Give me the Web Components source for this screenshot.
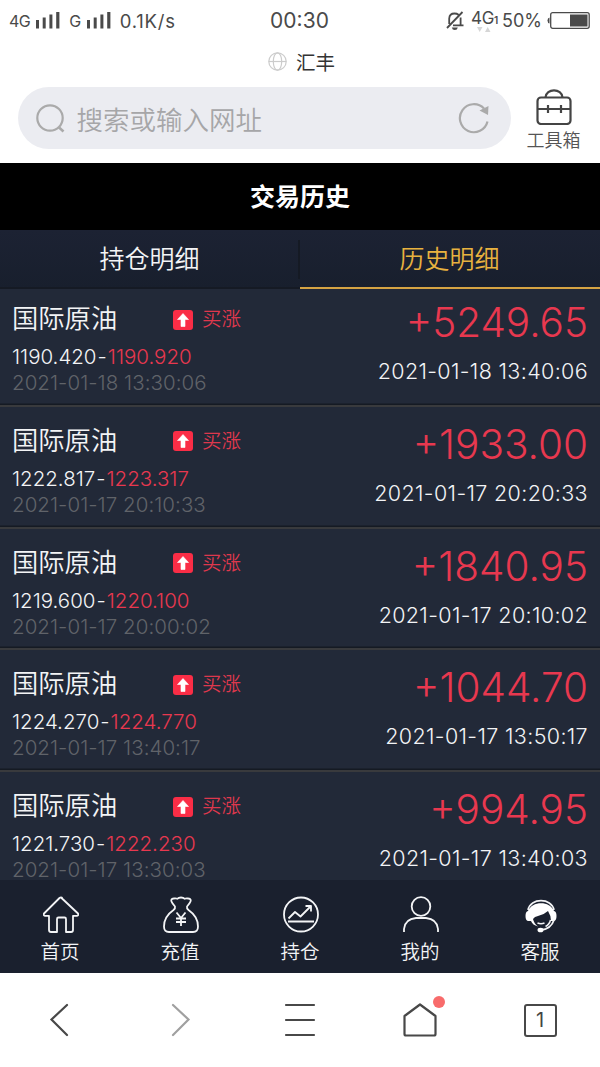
<!DOCTYPE html>
<html lang="zh-CN">
<head>
<meta charset="utf-8">
<meta name="viewport" content="width=device-width, initial-scale=1">
<title>交易历史</title>
<style>
    body {
        margin: 0;
        background: #fff;
        color: #444;
        font-family: Inter, "Noto Sans CJK SC", sans-serif;
    }
</style>
</head>
<body>
<history-app></history-app>

<script>
class StatusBar extends HTMLElement {
    constructor() {
        super();
        this.shadowDOM = this.attachShadow({mode: "open"});
    }

    connectedCallback() {
        this.render();
    }

    render() {
        const signal = `
        <svg width="24" height="17" viewBox="0 0 24 17" fill="#4a4a4a">
            <path d="M0 8h3v8.500H0zM6.700 5.500h3v11h-3zM13.400 2.500h3v14h-3zM20.200 0h3.200v16.500h-3.200z"/>
        </svg>`;
        this.shadowDOM.innerHTML = `
        <style>
            :host {
                display: grid;
                grid-template-columns: 1fr 60px 1fr;
                align-items: center;
                height: 41px;
                padding: 0 10px 0 9px;
                box-sizing: border-box;
                color: #4a4a4a;
                font-size: 18px;
                white-space: nowrap;
            }
            div {
                display: flex;
                align-items: center;
            }
            svg {
                flex: none;
                display: block;
            }
            .net {
                font-size: 16px;
            }
            .left .net {
                letter-spacing: -0.5px;
            }
            .left svg {
                margin: 0 9px 0 6px;
            }
            .speed {
                font-size: 18.500px;
                letter-spacing: 0.8px;
            }
            .time {
                font-size: 21px;
                justify-content: center;
            }
            .right {
                justify-content: flex-end;
            }
            .mobile {
                position: relative;
                margin: -6px 4px 0 7px;
                font-size: 17px;
                letter-spacing: -0.3px;
            }
            .mobile small {
                font-size: 10px;
                font-weight: 600;
            }
            .mobile svg {
                position: absolute;
                left: 6px;
                top: 19px;
            }
            .battery {
                margin-left: 5px;
            }
        </style>
        <div class="left">
            <span class="net">4G</span>${signal}<span class="net">G</span>${signal}<span class="speed">0.1K/s</span>
        </div>
        <div class="time">00:30</div>
        <div class="right">
            <svg width="18" height="20" viewBox="0 0 18 20" fill="none" stroke="#4a4a4a" stroke-width="1.800">
                <path d="M1 17 16.500 1M3.200 13V7.500Q3.500 2.500 8.500 2.500q2.500 0 4 1.200M14.600 6.500V14M7 14.300h10.500"/>
                <path d="M5.800 16.500h6q-.5 2.500-3 2.500t-3-2.500z" fill="#4a4a4a" stroke="none"/>
            </svg>
            <span class="mobile">4G<small>1</small>
                <svg width="14" height="5" viewBox="0 0 14 5" fill="#d6d6d6"><path d="M0 0h5.500L2.700 5zM8 5h5.500L10.700 0z"/></svg>
            </span>
            <span>50%</span>
            <svg class="battery" width="43" height="17" viewBox="0 0 43 17">
                <path d="M2.500 5.500v6q-2-.3-2-3t2-3z" fill="#4a4a4a"/>
                <rect x="3.700" y=".7" width="38.500" height="15.600" rx="2" fill="none" stroke="#4a4a4a" stroke-width="1.300"/>
                <path d="M23 2.500h17.500v12H23z" fill="#4a4a4a"/>
            </svg>
        </div>`;
    }
}

class SearchHead extends HTMLElement {
    constructor() {
        super();
        this.shadowDOM = this.attachShadow({mode: "open"});
    }

    connectedCallback() {
        this.render();
    }

    render() {
        this.shadowDOM.innerHTML = `
        <style>
            :host {
                display: block;
                height: 122px;
            }
            .site {
                display: flex;
                align-items: center;
                justify-content: center;
                gap: 9px;
                height: 40px;
                padding-left: 3px;
                color: #333;
                font-size: 19.500px;
            }
            .row {
                display: flex;
                align-items: flex-start;
                padding: 6px 18px 0 17.500px;
            }
            .field {
                display: flex;
                align-items: center;
                box-sizing: border-box;
                width: 493px;
                height: 62px;
                padding: 0 21px 0 18px;
                border-radius: 31px;
                background: #ebecf1;
                color: #a6a6a8;
                font-size: 26.500px;
                font-weight: 350;
            }
            .field span {
                flex: 1;
                padding-left: 12px;
            }
            .tools {
                display: flex;
                flex-direction: column;
                align-items: center;
                width: 56px;
                margin-left: 15px;
                padding-top: 1px;
                color: #555;
                font-size: 18px;
                font-weight: 350;
                line-height: 24px;
                white-space: nowrap;
            }
            svg {
                display: block;
                flex: none;
            }
            .tools svg {
                margin-bottom: 4px;
            }
        </style>
        <div class="site">
            <svg width="19" height="19" viewBox="0 0 19 19" fill="none" stroke="#ccc" stroke-width="1.200">
                <circle cx="9.500" cy="9.500" r="8.700"/><ellipse cx="9.500" cy="9.500" rx="4.200" ry="8.700"/>
                <path d="M.8 9.500h17.400"/>
            </svg>
            <span><slot></slot></span>
        </div>
        <div class="row">
            <div class="field">
                <svg width="29" height="30" viewBox="0 0 29 30" fill="none" stroke="#aaa" stroke-width="2.200">
                    <circle cx="14" cy="15" r="12.700"/><path d="m22.500 24 5 4.500" stroke-width="2.600"/>
                </svg>
                <span>搜索或输入网址</span>
                <svg width="32" height="32" viewBox="0 0 32 32" fill="none" stroke="#aaa" stroke-width="2.200">
                    <path d="M29.500 19.500A14 14 0 1 1 26 6.500"/><path d="m30.500 4-.5 9-8.500-4.500z" fill="#aaa" stroke="none"/>
                </svg>
            </div>
            <div class="tools">
                <svg width="36" height="37" viewBox="0 0 36 37" fill="none" stroke="#444" stroke-width="2.200">
                    <rect x="1.500" y="9.500" width="33" height="26.500" rx="3.500"/>
                    <path d="M9.500 9.500C10 0 26 0 26.500 9.500M1.500 21h33M12 17v8M25 17v8"/>
                </svg>
                工具箱
            </div>
        </div>`;
    }
}

class TabBar extends HTMLElement {
    constructor() {
        super();
        this.shadowDOM = this.attachShadow({mode: "open"});
    }

    connectedCallback() {
        this.render();
    }

    render() {
        this.shadowDOM.innerHTML = `
        <style>
            :host {
                display: grid;
                grid-template-columns: 1fr 1fr;
                height: 59px;
                background: linear-gradient(#1c2233, #181f2d);
                color: #f3f4f6;
                font-size: 25px;
                font-weight: 350;
            }
            div {
                display: flex;
                align-items: center;
                justify-content: center;
                box-sizing: border-box;
                padding: 0 1px 3px 0;
                border-bottom: 2px solid #151a24;
            }
            .line {
                background: linear-gradient(#151a24, #151a24) right 10px / 2px 39px no-repeat;
            }
            .active {
                color: #e8b23f;
                border-color: #d5a343;
            }
        </style>
        <div class="line"><slot name="open"></slot></div>
        <div class="active"><slot name="history"></slot></div>`;
    }
}

class TradeRow extends HTMLElement {
    constructor() {
        super();
        this.shadowDOM = this.attachShadow({mode: "open"});
    }

    connectedCallback() {
        this.render();
    }

    render() {
        const get = name => this.getAttribute(name);
        this.shadowDOM.innerHTML = `
        <style>
            :host {
                display: flex;
                justify-content: space-between;
                flex: none;
                box-sizing: border-box;
                height: 121.750px;
                padding: 16px 12px 0;
                border-bottom: 2px solid #393a3d;
                box-shadow: inset 0 -1.500px #151a23;
                background: #222938;
                color: #f3f4f6;
                font-size: 20.500px;
                font-weight: 300;
                white-space: nowrap;
            }
            .name {
                display: flex;
                align-items: center;
                height: 34px;
                font-size: 26.300px;
                font-weight: 350;
            }
            .name span {
                width: 161px;
                margin-top: -3px;
            }
            .name svg {
                margin-top: 3px;
            }
            .name em {
                margin: -1px 0 0 9px;
                color: #de384d;
                font-size: 19.500px;
                font-style: normal;
            }
            .price {
                margin-top: 9px;
                line-height: 26px;
            }
            .price span {
                padding: 0 1px;
            }
            .price b, .amount {
                color: #e8384f;
                font-weight: 300;
            }
            .opened {
                margin-top: 4px;
                color: #606369;
                line-height: 18px;
                letter-spacing: 0.05px;
            }
            .right {
                text-align: right;
            }
            .amount {
                font-size: 40.500px;
                line-height: 44px;
            }
            .closed {
                margin-top: 11px;
                font-size: 21.500px;
                line-height: 30px;
                letter-spacing: 0.35px;
            }
        </style>
        <div>
            <div class="name">
                <span>国际原油</span>
                <svg width="20" height="20" viewBox="0 0 20 20">
                    <rect width="20" height="20" rx="3" fill="#fa2d46"/>
                    <path d="M10 3.500 15.500 9.500H12V16.500H8V9.500H4.500z" fill="#fff" stroke="#fff" stroke-width=".6" stroke-linejoin="round"/>
                </svg>
                <em>买涨</em>
            </div>
            <div class="price">${get("from")}<span>-</span><b>${get("to")}</b></div>
            <div class="opened">${get("opened")}</div>
        </div>
        <div class="right">
            <div class="amount">${get("amount")}</div>
            <div class="closed">${get("closed")}</div>
        </div>`;
    }
}

class NavItem extends HTMLElement {
    constructor() {
        super();
        this.shadowDOM = this.attachShadow({mode: "open"});
    }

    connectedCallback() {
        this.render();
    }

    render() {
        const icons = {
            home: `<path d="M18 1.500 35 17.500q1 2-1 2.300h-4V34q0 2-2 2h-5V23q0-1.500-1.500-1.500h-6Q14 21.500 14 23v13H8q-2 0-2-2V19.800H2Q0 19.500 1 17.500L16.500 2q1.500-1.300 3 0"/>`,
            bag: `<path d="M12 10.500Q9 7 8.500 5.500 7.500 3 10.500 2.500q2.500-.5 4 .3 1-1.300 3.500-1.300t3.500 1.300q1.500-.8 4-.3 3 .5 2 3Q27 7 24 10.500q-.5 2 1.500 3.500C32 18.500 35 25 35 30.500q0 5.500-5 5.500H6q-5 0-5-5.500C1 25 4 18.500 10.500 14q2-1.500 1.500-3.500z"/><path d="m13.500 16.500 4.500 5.500 4.500-5.500M18 22v8M13 22.500h10M13 26h10"/>`,
            chart: `<circle cx="18" cy="18.500" r="17"/><path d="M5.500 22.500 12 16l5.500 4.500L28 10M22.500 10H28v5.500M5 25.500h26"/>`,
            user: `<circle cx="18" cy="10.500" r="9.300"/><path d="M1 36v-3q1-10 12-11h10q11 1 12 11v3"/>`,
            service: `<path d="M5 14C7.500 1.500 28.500 1.500 31 14" stroke-width="1.600"/><path d="M5 15C9 4.500 27 4.500 31 15q2.500.5 2.500 5T31 25h-3q0-5.500-3-10-4.500 4-10 5-3.500.7-5 3 1 4.500 5 7.500-5.500-1.500-7-5.500H5q-2.500-.5-2.500-5T5 15z" fill="#fff" stroke="none"/><path d="M27.500 24q-1 4.500-5 6.500M14.500 27q3.500 1.500 7 0" stroke-width="1.500"/><path d="M31 24q-3 9-13 10" stroke-width="1.800"/><ellipse cx="17.500" cy="34" rx="3" ry="2.300" fill="#fff" stroke="none"/>`
        };
        this.shadowDOM.innerHTML = `
        <style>
            :host {
                display: flex;
                flex-direction: column;
                align-items: center;
                padding-top: 16px;
                color: #f3f4f6;
                font-size: 19.500px;
                font-weight: 350;
                line-height: 26px;
            }
            svg {
                display: block;
                margin: 0 0 5px 1px;
            }
        </style>
        <svg width="36" height="38" viewBox="0 0 36 38" fill="none" stroke="#f3f4f6" stroke-width="1.800" stroke-linejoin="round">${icons[this.getAttribute("icon")]}</svg>
        <slot></slot>`;
    }
}

class BrowserBar extends HTMLElement {
    constructor() {
        super();
        this.shadowDOM = this.attachShadow({mode: "open"});
    }

    connectedCallback() {
        this.render();
    }

    render() {
        this.shadowDOM.innerHTML = `
        <style>
            :host {
                display: grid;
                grid-template-columns: repeat(5, 1fr);
                place-items: center;
                height: 94px;
                background: #fff;
            }
            svg {
                display: block;
            }
            .home {
                position: relative;
            }
            .home i {
                position: absolute;
                right: -8px;
                top: -7px;
                width: 12px;
                height: 12px;
                border-radius: 50%;
                background: #f86b6b;
            }
            .count {
                display: grid;
                place-items: center;
                box-sizing: border-box;
                width: 33px;
                height: 33px;
                border: 2px solid #484848;
                border-radius: 3px;
                font-size: 20px;
            }
        </style>
        <svg width="34" height="34" viewBox="0 0 34 34" fill="none" stroke="#484848" stroke-width="2.200" stroke-linecap="round"><path d="M24 2 8.500 16.500 24 32"/></svg>
        <svg width="34" height="34" viewBox="0 0 34 34" fill="none" stroke="#a0a0a0" stroke-width="2.200" stroke-linecap="round"><path d="m10 2 15.500 14.500-15.500 15.500"/></svg>
        <svg width="34" height="34" viewBox="0 0 34 34" fill="none" stroke="#484848" stroke-width="2.200" stroke-linecap="round"><path d="M3 2h28M3 17h28M3 32h28"/></svg>
        <div class="home">
            <svg width="34" height="34" viewBox="0 0 34 34" fill="none" stroke="#484848" stroke-width="2.200" stroke-linejoin="round"><path d="m17 1.500 15.500 11.500V31q0 1.500-1.500 1.500H3Q1.500 32.500 1.500 31V13z"/></svg>
            <i></i>
        </div>
        <div class="count">1</div>`;
    }
}

class HistoryApp extends HTMLElement {
    constructor() {
        super();
        this.shadowDOM = this.attachShadow({mode: "open"});
    }

    connectedCallback() {
        this.render();
    }

    render() {
        this.shadowDOM.innerHTML = `
        <style>
            :host {
                display: flex;
                flex-direction: column;
                width: 600px;
                height: 1067px;
                overflow: hidden;
            }
            h1 {
                margin: 0;
                height: 67px;
                background: #000;
                color: #fff;
                font-size: 25px;
                font-weight: 700;
                line-height: 69px;
                text-align: center;
            }
            main {
                display: flex;
                flex-direction: column;
                height: 591px;
                overflow: hidden;
                background: #222938;
            }
            main trade-row:first-child {
                margin-top: -4px;
            }
            nav {
                display: grid;
                grid-template-columns: repeat(5, 1fr);
                height: 93px;
                background: #1a202e;
            }
        </style>
        <status-bar></status-bar>
        <search-head>汇丰</search-head>
        <h1>交易历史</h1>
        <tab-bar><span slot="open">持仓明细</span><span slot="history">历史明细</span></tab-bar>
        <main>
            <trade-row from="1190.420" to="1190.920" opened="2021-01-18 13:30:06" amount="+5249.65" closed="2021-01-18 13:40:06"></trade-row>
            <trade-row from="1222.817" to="1223.317" opened="2021-01-17 20:10:33" amount="+1933.00" closed="2021-01-17 20:20:33"></trade-row>
            <trade-row from="1219.600" to="1220.100" opened="2021-01-17 20:00:02" amount="+1840.95" closed="2021-01-17 20:10:02"></trade-row>
            <trade-row from="1224.270" to="1224.770" opened="2021-01-17 13:40:17" amount="+1044.70" closed="2021-01-17 13:50:17"></trade-row>
            <trade-row from="1221.730" to="1222.230" opened="2021-01-17 13:30:03" amount="+994.95" closed="2021-01-17 13:40:03"></trade-row>
        </main>
        <nav>
            <nav-item icon="home">首页</nav-item>
            <nav-item icon="bag">充值</nav-item>
            <nav-item icon="chart">持仓</nav-item>
            <nav-item icon="user">我的</nav-item>
            <nav-item icon="service">客服</nav-item>
        </nav>
        <browser-bar></browser-bar>`;
    }
}

customElements.define("status-bar", StatusBar);
customElements.define("search-head", SearchHead);
customElements.define("tab-bar", TabBar);
customElements.define("trade-row", TradeRow);
customElements.define("nav-item", NavItem);
customElements.define("browser-bar", BrowserBar);
customElements.define("history-app", HistoryApp);
</script>
</body>
</html>
